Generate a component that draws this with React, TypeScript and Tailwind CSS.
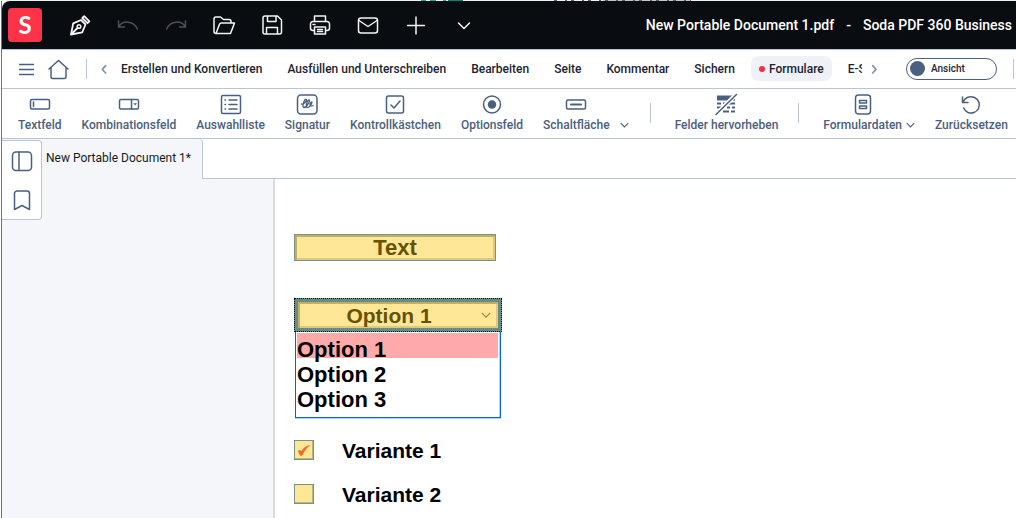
import type { ReactNode } from "react"

interface IconProps {
  children: ReactNode
  className?: string
}

function Icon({ children, className = "h-6 w-6" }: IconProps) {
  return (
    <svg
      className={className}
      viewBox="0 0 24 24"
      fill="none"
      stroke="currentColor"
      strokeWidth={1.5}
      strokeLinecap="round"
      strokeLinejoin="round"
      aria-hidden="true"
    >
      {children}
    </svg>
  )
}

function ChevronDown({ className }: { className: string }) {
  return (
    <svg className={className} viewBox="0 0 12 8" fill="none" stroke="currentColor" strokeWidth={1.5} aria-hidden="true">
      <path d="M1 1.5l5 5 5-5" />
    </svg>
  )
}

const quickActions = [
  {
    label: "Signieren",
    icon: (
      <Icon>
        <path strokeWidth={1.8} d="M3 21.5l2.2-11.200 7.800-3.300 4.500 4.500-3.300 7.800L3 21.500zM3 21.500l6.500-6.500M14.300 5l1.900-1.900 5.200 5.200-1.900 1.900z" />
        <circle cx="11" cy="13.500" r="1.800" />
      </Icon>
    )
  },
  { label: "Rückgängig", muted: true, icon: <Icon><path d="M2.5 8v6h6M2.8 13.7C6.5 7.5 17 7 21.5 16" /></Icon> },
  { label: "Wiederholen", muted: true, icon: <Icon><path d="M21.5 8v6h-6M21.2 13.7C17.5 7.5 7 7 2.5 16" /></Icon> },
  {
    label: "Öffnen",
    icon: <Icon><path d="M4 20.5c-1 0-2-.9-2-2V6a2 2 0 0 1 2-2h4.500l3 2.500H17a2 2 0 0 1 2 2V10M4 20.500h14.500L22.500 10H9.500c-1 0-1.700.4-2 1.200L4 20.500z" /></Icon>
  },
  {
    label: "Speichern",
    icon: (
      <Icon>
        <path d="M5 3h12.500L21.500 7v12a2 2 0 0 1-2 2H5a2 2 0 0 1-2-2V5a2 2 0 0 1 2-2zM7.500 3v5.500h8.500V3M6.500 21v-6.500h11V21" />
      </Icon>
    )
  },
  {
    label: "Drucken",
    icon: (
      <Icon>
        <path d="M6.500 8V3h11v5M6.500 17.500H5a2.500 2.500 0 0 1-2.500-2.500v-4A2.500 2.500 0 0 1 5 8.500h14a2.500 2.500 0 0 1 2.500 2.500v4a2.500 2.500 0 0 1-2.500 2.500h-1.500M6.500 14h11v7h-11zM5 11.500h2M9.500 16.500h5M9.500 18.500h5" />
      </Icon>
    )
  },
  {
    label: "E-Mail",
    icon: <Icon><rect x="2.500" y="5" width="19" height="15" rx="2.500" /><path d="M3 7.500l9 6 9-6" /></Icon>
  },
  { label: "Hinzufügen", icon: <Icon><path d="M12 4v17M3.500 12.500h17" /></Icon> },
  { label: "Mehr", icon: <Icon><path d="M6.500 10l5.500 5.500L17.500 10" /></Icon> }
]

const menuItems = [
  "Erstellen und Konvertieren",
  "Ausfüllen und Unterschreiben",
  "Bearbeiten",
  "Seite",
  "Kommentar",
  "Sichern",
  "Formulare",
  "E-Sign"
]

interface ToolProps {
  label: string
  children: ReactNode
}

function Tool({ label, children }: ToolProps) {
  return (
    <button type="button" className="flex shrink-0 flex-col items-center gap-px">
      <Icon>{children}</Icon>
      <span className="leading-4">{label}</span>
    </button>
  )
}

function TitleBar() {
  return (
    <header className="flex h-12 items-center rounded-tl-lg bg-[#090c10] pl-1.5 text-[#f4f4f4]">
      <div className="flex h-[34px] w-[34px] shrink-0 items-center justify-center rounded bg-[#ff3347] font-[Lato] text-2xl font-bold text-white">
        S
      </div>
      <div className="ml-3.5 flex shrink-0">
        {quickActions.map((action) => (
          <button
            key={action.label}
            type="button"
            aria-label={action.label}
            className={action.muted ? "flex w-12 justify-center text-[#4d5257]" : "flex w-12 justify-center"}
          >
            {action.icon}
          </button>
        ))}
      </div>
      <h1 className="ml-auto flex gap-3 pr-1 text-sm font-medium whitespace-nowrap text-white">
        <span>New Portable Document 1.pdf</span>
        <span>-</span>
        <span>Soda PDF 360 Business</span>
      </h1>
    </header>
  )
}

function MenuBar() {
  return (
    <nav className="flex h-10 items-center border-y border-[#b9c4d6] pb-px pl-3.5 text-xs font-medium text-[#1c2430]">
      <button type="button" aria-label="Menü" className="shrink-0 p-0.5 text-[#4a6080]">
        <svg className="h-4 w-4" viewBox="0 0 16 16" stroke="currentColor" strokeWidth={1.4} aria-hidden="true">
          <path d="M1 3.500h15M1 8.500h15M1 13.500h15" />
        </svg>
      </button>
      <button type="button" aria-label="Startseite" className="ml-2.5 shrink-0 text-[#4a6080]">
        <Icon>
          <path d="M3 12l9.500-8.500L22 12M5 10.500V20c0 1 .6 1.500 1.500 1.500h12c1 0 1.500-.5 1.500-1.500v-9.500" />
        </Icon>
      </button>
      <div className="ml-4 h-5 w-px shrink-0 bg-[#b9c4d6]" />
      <button type="button" aria-label="Zurück" className="ml-2.5 shrink-0 text-[#8294ad]">
        <Icon className="h-4 w-4"><path strokeWidth={2.5} d="M13 7l-5 5.500 5 5.500" /></Icon>
      </button>
      <div className="flex min-w-0 flex-1 gap-[9px] overflow-hidden">
        {menuItems.map((item) => (
          <button
            key={item}
            type="button"
            className={
              item === "Formulare"
                ? "-mx-px flex h-[25px] shrink-0 items-center gap-1 rounded-lg bg-[#eef1f6] px-2"
                : "flex h-[25px] shrink-0 items-center px-2"
            }
          >
            {item === "Formulare" && <span className="h-1.5 w-1.5 rounded-full bg-[#ff2d3f]" />}
            {item}
          </button>
        ))}
      </div>
      <button type="button" aria-label="Weiter" className="ml-1 shrink-0 text-[#8294ad]">
        <Icon className="h-4 w-4"><path strokeWidth={2.5} d="M10 7l5 5.500-5 5.500" /></Icon>
      </button>
      <button
        type="button"
        className="ml-6 flex h-[22px] w-[91px] shrink-0 items-center gap-1.5 rounded-full border border-[#4a6080] px-[3px] text-[10px]"
      >
        <span className="h-[15px] w-[15px] rounded-full bg-[#4a6080]" />
        Ansicht
      </button>
      <div className="mr-0.5 ml-4 h-5 w-px shrink-0 bg-[#b9c4d6]" />
    </nav>
  )
}

function Toolbar() {
  return (
    <div className="flex h-[50px] items-start gap-5 overflow-hidden border-b border-[#b9c4d6] pt-[3px] pl-4 text-xs font-medium whitespace-nowrap text-[#4a6080]">
      <Tool label="Textfeld">
        <rect x="2.500" y="7.500" width="19" height="9.500" rx="1.500" />
        <path d="M5.500 10v4.500" />
      </Tool>
      <Tool label="Kombinationsfeld">
        <rect x="2.500" y="7.500" width="19" height="9.500" rx="1.500" />
        <path d="M14.500 7.500V17" />
        <path d="M17 11.500h2.500l-1.200 1.500z" fill="currentColor" strokeWidth={0.5} />
      </Tool>
      <Tool label="Auswahlliste">
        <rect x="2.500" y="3.500" width="19" height="18" rx="1.500" />
        <path d="M6 8h.5M10 8h8M6 12.500h.5M10 12.500h8M6 17h.5M10 17h8" />
      </Tool>
      <Tool label="Signatur">
        <rect x="2.500" y="3" width="19.500" height="19" rx="3.500" />
        <path
          strokeWidth={1.3}
          d="M6.500 12c2.500.5 5-2.500 5-4 0-1.200-1.500-.8-2.500 1.500-1.200 2.800-1.500 6 0 6 2.200 0 5.500-5 5.500-7 0-1.200-1.800-.5-2.600 2-.8 2.500-.9 5 .6 5 2.200 0 4.500-4 4.500-5.300-.2-1-1.600.2-1.900 2-.3 1.800.8 2.500 2.900 1.300"
        />
      </Tool>
      <Tool label="Kontrollkästchen">
        <rect x="3.500" y="4" width="17" height="17" rx="2" />
        <path d="M8 13l3 3 6-7" />
      </Tool>
      <Tool label="Optionsfeld">
        <circle cx="12" cy="12.500" r="8.500" />
        <circle cx="12" cy="12.500" r="3.500" fill="currentColor" />
      </Tool>
      <div className="flex items-end gap-2.5">
        <Tool label="Schaltfläche">
          <rect x="2.500" y="8" width="19" height="9" rx="1.500" />
          <path d="M7 12.500h10" strokeWidth={2} />
        </Tool>
        <ChevronDown className="mb-1 h-2 w-[9px]" />
      </div>
      <div className="mt-[11px] mr-1 ml-px h-5 w-px shrink-0 bg-[#b9c4d6]" />
      <Tool label="Felder hervorheben">
        <path d="M3 3.500h18v5H3z" fill="currentColor" stroke="none" />
        <path d="M3 11.500h4M9 11.500h12M3 15.500h7M13 15.500h3M18 15.500h3M3 19.500h3M9 19.500h6M17 19.500h4" strokeWidth={2} strokeLinecap="butt" />
        <path d="M2 22.500L22.500 2" stroke="#fff" strokeWidth={4.5} strokeLinecap="butt" />
        <path d="M2 22.500L22.500 2.500" />
      </Tool>
      <div className="mt-[11px] mr-1 h-5 w-px shrink-0 bg-[#b9c4d6]" />
      <div className="flex items-end gap-1">
        <Tool label="Formulardaten">
          <rect x="4.500" y="3" width="15" height="19" rx="3" />
          <path d="M8.500 8.500h7v2.500h-7zM8.500 14h7v2.500h-7z" />
        </Tool>
        <ChevronDown className="mb-1 h-2 w-[9px]" />
      </div>
      <Tool label="Zurücksetzen">
        <path d="M3.500 5v5.500H9M4 10c2-4.500 7-6.500 11.500-4.500 4.500 2.200 6 7 4 11s-6.500 5.500-10.500 4c-2-1-3.500-2.500-4.300-4.500" />
      </Tool>
    </div>
  )
}

function SideRail() {
  return (
    <aside className="absolute top-px left-0 flex h-20 w-10 flex-col items-center justify-around rounded-r border border-l-0 border-[#b9c4d6] bg-white text-[#4a6080]">
      <button type="button" aria-label="Seitenansicht">
        <Icon><rect x="2.500" y="3" width="19" height="18.500" rx="3.500" /><path d="M9 3v18.500" /></Icon>
      </button>
      <button type="button" aria-label="Lesezeichen">
        <Icon><path d="M4.500 21.500V5.500a2.500 2.500 0 0 1 2.500-2.500h10a2.500 2.500 0 0 1 2.500 2.500v16L12 17.500z" /></Icon>
      </button>
    </aside>
  )
}

function CheckField({ label, checked }: { label: string; checked?: boolean }) {
  return (
    <label className="flex h-5 items-center gap-7">
      <span className="relative flex h-5 w-5">
        <input
          type="checkbox"
          defaultChecked={checked}
          className="peer h-5 w-5 appearance-none border border-[#789482] bg-[#ffe798] shadow-[inset_-1px_-1px_0_#bdb47c]"
        />
        <svg className="pointer-events-none absolute inset-0 hidden h-5 w-5 peer-checked:block" viewBox="0 0 20 20" aria-hidden="true">
          <path d="M4 11c1-1.600 2.700-1.400 3.300.5C9 8.500 12 5.500 16.500 5 12.800 7.500 10.500 11 8.500 15c-.6 1-2.300.9-2.800-.1z" fill="#ff6620" />
        </svg>
      </span>
      {label}
    </label>
  )
}

function FormPage() {
  return (
    <form className="flex flex-col items-start pt-[55px] pl-[19px] font-['Liberation_Sans',Arial,sans-serif] text-[22px] leading-[25px] font-bold text-black">
      <input
        aria-label="Text"
        defaultValue="Text"
        className="h-[27px] w-[202px] border border-[#789482] bg-[#ffe798] text-center text-[#665200] shadow-[inset_2px_2px_0_#c4ae62,inset_-2px_-2px_0_#dfc982]"
      />
      <div className="mt-[37px] w-52">
        <div className="relative border border-dotted border-black bg-[#668c83] p-[3px]">
          <select
            aria-label="Option"
            className="block h-[26px] w-full appearance-none bg-[#ffe798] pr-[18px] text-center text-[21px] text-[#665200] shadow-[inset_2px_2px_0_#c4ae62,inset_-2px_-2px_0_#dfc982]"
          >
            <option>Option 1</option>
            <option>Option 2</option>
            <option>Option 3</option>
          </select>
          <ChevronDown className="pointer-events-none absolute top-3 right-2.5 h-2 w-2.5 text-[#9c8745]" />
        </div>
        <ul
          role="listbox"
          aria-label="Optionen"
          className="mx-px border border-t-0 border-[#0066d6] px-px pt-px pb-[9px] leading-[33px] shadow-[inset_-1px_0_0_#b5d3f3,0_1px_0_#b5d3f3]"
        >
          <li role="option" aria-selected="true" className="mr-px h-[25px] bg-[#ffaaaa]">Option 1</li>
          <li role="option" aria-selected="false" className="h-[25px]">Option 2</li>
          <li role="option" aria-selected="false" className="h-[25px]">Option 3</li>
        </ul>
      </div>
      <div className="mt-[22px] flex flex-col gap-6 text-[21px]">
        <CheckField label="Variante 1" checked />
        <CheckField label="Variante 2" />
      </div>
    </form>
  )
}

export default function App() {
  return (
    <div className="flex min-h-screen flex-col overflow-x-hidden bg-white pl-px font-[Roboto,sans-serif]">
      <svg className="h-px w-full" aria-hidden="true">
        <rect width="100%" height="1" fill="#eaf5f3" />
        <path d="M420 .5h5M429 .5h6M442 .5h3" stroke="#12b394" />
        <path d="M447 .5h15" stroke="#07866f" />
        <path d="M602 .5h88" stroke="#bfc6c6" />
        <path d="M553 .5h137" stroke="#5b5f6b" strokeDasharray="3 8 2 4" />
      </svg>
      <div className="flex flex-1 flex-col border-l border-[#70757b]">
        <TitleBar />
        <MenuBar />
        <Toolbar />
        <div className="relative flex flex-1 flex-col">
          <div className="flex h-10">
            <div className="flex w-[201px] shrink-0 items-center rounded-tr border-r border-[#b9c4d6] bg-[#f4f6f9] pl-11 pb-0.5 text-xs whitespace-nowrap text-[#161b22]">
              New Portable Document 1*
            </div>
            <div className="flex-1 border-b border-[#b9c4d6]" />
          </div>
          <main className="flex flex-1">
            <div className="w-[273px] shrink-0 border-r-2 border-[#d9dbdc] bg-[#f4f6f9]" />
            <FormPage />
          </main>
          <SideRail />
        </div>
      </div>
    </div>
  )
}
